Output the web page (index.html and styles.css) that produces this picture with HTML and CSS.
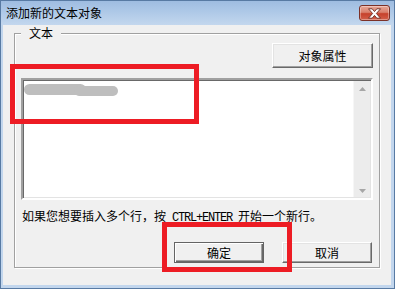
FILE: index.html
```html
<!DOCTYPE html>
<html lang="zh-CN">
<head>
<meta charset="utf-8">
<title>添加新的文本对象</title>
<link rel="stylesheet" href="styles.css">
</head>
<body>
<div class="window">
  <div class="titlebar">
    <span class="title">添加新的文本对象</span>
    <div class="close">
      <svg width="15" height="11" viewBox="0 0 15 11"><path d="M1.5 0.8 L5.2 0.8 L7.5 3.6 L9.8 0.8 L13.5 0.8 L9.4 5.5 L13.5 10.2 L9.8 10.2 L7.5 7.4 L5.2 10.2 L1.5 10.2 L5.6 5.5 Z" fill="#fff" stroke="#6b2a20" stroke-width="0.9" stroke-linejoin="round"/></svg>
    </div>
  </div>
  <div class="client">
    <div class="group">
      <span class="legend">文本</span>
      <div class="row-top">
        <button class="btn btn-props">对象属性</button>
      </div>
      <div class="edit">
        <div class="edit-area">
          <div class="smudge"><span class="blob blob-a"></span><span class="blob blob-b"></span></div>
        </div>
        <div class="scrollbar">
          <svg class="arrow" width="7" height="4" viewBox="0 0 7 4"><path d="M0 4 L3.5 0 L7 4 Z" fill="#a6a6a6"/></svg>
          <svg class="arrow" width="7" height="4" viewBox="0 0 7 4"><path d="M0 0 L7 0 L3.5 4 Z" fill="#a6a6a6"/></svg>
        </div>
      </div>
      <p class="hint">如果您想要插入多个行，按<span class="mono"> CTRL+ENTER </span>开始一个新行。</p>
      <div class="row-btns">
        <button class="btn btn-default">确定</button>
        <button class="btn">取消</button>
      </div>
    </div>
  </div>
  <div class="mark mark-edit"></div>
  <div class="mark mark-ok"></div>
</div>
</body>
</html>
```

FILE: styles.css
```css
* { box-sizing: border-box; }

html, body {
  margin: 0;
  padding: 0;
  background: #ffffff;
}

body {
  font-family: "Noto Sans CJK SC", "Liberation Sans", sans-serif;
  font-size: 12px;
  color: #000;
}

.window {
  position: relative;
  width: 395px;
  height: 289px;
  background: #c2d6ed;
  box-shadow: inset 0 0 0 1px #587aa3;
  padding: 0 4px 4px 3px;
  display: flex;
  flex-direction: column;
}

.titlebar {
  height: 25px;
  margin: 0 -4px 0 -3px;
  padding: 0 5px 0 6px;
  background: linear-gradient(#9dbbe0 0%, #adc8e7 45%, #c3d7ee 100%);
  box-shadow: inset 0 1px 0 #587aa3, inset 1px 0 0 #587aa3, inset -1px 0 0 #587aa3;
  display: flex;
  justify-content: space-between;
  align-items: flex-start;
}

.title {
  line-height: 16px;
  margin-top: 5px;
  color: #000;
  white-space: nowrap;
}

.close {
  margin-top: 5px;
  width: 31px;
  height: 16px;
  border: 1px solid #7c3127;
  border-radius: 3px;
  background: linear-gradient(#e8a898 0%, #d9806c 45%, #c6412b 55%, #d2604a 100%);
  box-shadow: inset 0 0 0 1px rgba(255,255,255,0.35);
  display: flex;
  align-items: center;
  justify-content: center;
}

.client {
  height: 260px;
  background: #f0f0f0;
  padding: 8px 11px 0 11px;
}

.group {
  position: relative;
  height: 235px;
  border: 1px solid #a0a0a0;
  box-shadow: inset 1px 1px 0 #ffffff, 1px 1px 0 #ffffff;
  display: flex;
  flex-direction: column;
}

.legend {
  position: absolute;
  top: -8px;
  left: 6px;
  padding: 0 8px;
  line-height: 14px;
  background: #f0f0f0;
}

.row-top {
  display: flex;
  justify-content: flex-end;
  padding-right: 6px;
  margin-top: 9px;
}

.btn {
  font-family: "Noto Sans CJK SC", "Liberation Sans", sans-serif;
  font-size: 12px;
  color: #000;
  background: #f0f0f0;
  border: 1px solid;
  border-color: #ffffff #696969 #696969 #ffffff;
  box-shadow: inset -1px -1px 0 #a0a0a0, inset 1px 1px 0 #e3e3e3;
  padding: 0;
  margin: 0;
  width: 90px;
  height: 21px;
  line-height: 17px;
}

.btn-props {
  width: 101px;
  height: 25px;
  line-height: 21px;
}

.btn-default {
  border-color: #646464;
  box-shadow: inset 1px 1px 0 #ffffff, inset -1px -1px 0 #696969, inset -2px -2px 0 #a0a0a0;
}

.edit {
  margin: 10px 6px 0 6px;
  height: 122px;
  background: #ffffff;
  border: 2px solid;
  border-color: #a0a0a0 #ffffff #ffffff #a0a0a0;
  box-shadow: inset 1px 1px 0 #696969, inset -1px -1px 0 #e3e3e3;
  display: flex;
  padding: 1px 1px 1px 1px;
}

.edit-area {
  flex: 1;
  padding: 2px 0 0 0;
}

.smudge {
  position: relative;
  width: 94px;
  height: 14px;
}

.blob {
  position: absolute;
  display: block;
  background: #bebebe;
  filter: blur(0.6px);
  border-radius: 7px;
}

.blob-a {
  left: 0;
  top: 1px;
  width: 62px;
  height: 11px;
}

.blob-b {
  left: 50px;
  top: 3px;
  width: 44px;
  height: 10px;
}

.scrollbar {
  width: 17px;
  background: #ececec;
  box-shadow: inset 1px 0 0 #f6f6f6;
  display: flex;
  flex-direction: column;
  justify-content: space-between;
  align-items: center;
  padding: 6px 0 4px 1px;
}

.arrow { display: block; }

.hint {
  margin: 8px 0 0 0;
  padding-left: 7px;
  line-height: 16px;
  white-space: nowrap;
}

.mono {
  font-family: "Liberation Mono", monospace;
  font-size: 12px;
  letter-spacing: -1.2px;
}

.row-btns {
  display: flex;
  justify-content: flex-end;
  gap: 18px;
  padding-right: 7px;
  margin-top: 16px;
}

.mark {
  position: absolute;
  border: 5px solid #ed1c24;
}

.mark-edit {
  left: 10px;
  top: 64px;
  width: 189px;
  height: 60px;
}

.mark-ok {
  left: 162px;
  top: 222px;
  width: 130px;
  height: 50px;
}
```
